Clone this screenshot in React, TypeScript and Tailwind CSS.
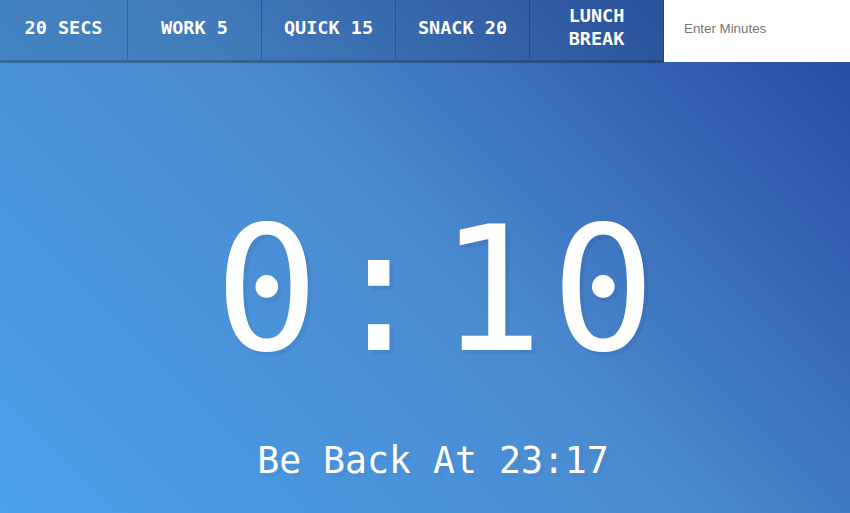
import React from "react";

const presets = [
  { label: "20 Secs", seconds: 20, width: "w-[128px]" },
  { label: "Work 5", seconds: 300, width: "w-[134px]" },
  { label: "Quick 15", seconds: 900, width: "w-[134px]" },
  { label: "Snack 20", seconds: 1200, width: "w-[134px]" },
  { label: "Lunch Break", seconds: 3600, width: "w-[134px]" },
];

const App = () => {
  return (
    <div
      className="h-[513px] w-full overflow-hidden flex flex-col text-white bg-[linear-gradient(45deg,#4aa0eb_0%,#4a8bd0_50%,#2546a0_100%)]"
      style={{ fontFamily: "'DejaVu Sans Mono', monospace" }}
    >
      <div className="flex h-[63px] shrink-0">
        {presets.map((p) => (
          <button
            key={p.label}
            className={`${p.width} h-[63px] shrink-0 bg-black/10 border-r border-b-[3px] border-black/20 text-[18.5px] font-bold uppercase leading-[23px] px-4 pb-[6px]`}
            data-time={p.seconds}
          >
            {p.label}
          </button>
        ))}
        <form className="flex-1 flex h-[62px]">
          <input
            type="text"
            placeholder="Enter Minutes"
            className="flex-1 min-w-0 bg-white border-0 pl-5 pb-1 text-[13.33px] text-black placeholder:text-[#757575] outline-none"
            style={{ fontFamily: "'Liberation Sans', Arial, sans-serif" }}
          />
        </form>
      </div>

      <div className="flex-1 flex flex-col items-center pt-[141px] pl-[16px]">
        <h1 className="text-[173px] leading-none font-normal tracking-[8px] pl-[12px] [text-shadow:4px_4px_0_rgba(0,0,0,0.05)]">
          0:10
        </h1>
        <p className="mt-[66px] text-[36.5px] leading-none [text-shadow:4px_4px_0_rgba(0,0,0,0.05)]">
          Be Back At 23:17
        </p>
      </div>
    </div>
  );
};

export default App;
